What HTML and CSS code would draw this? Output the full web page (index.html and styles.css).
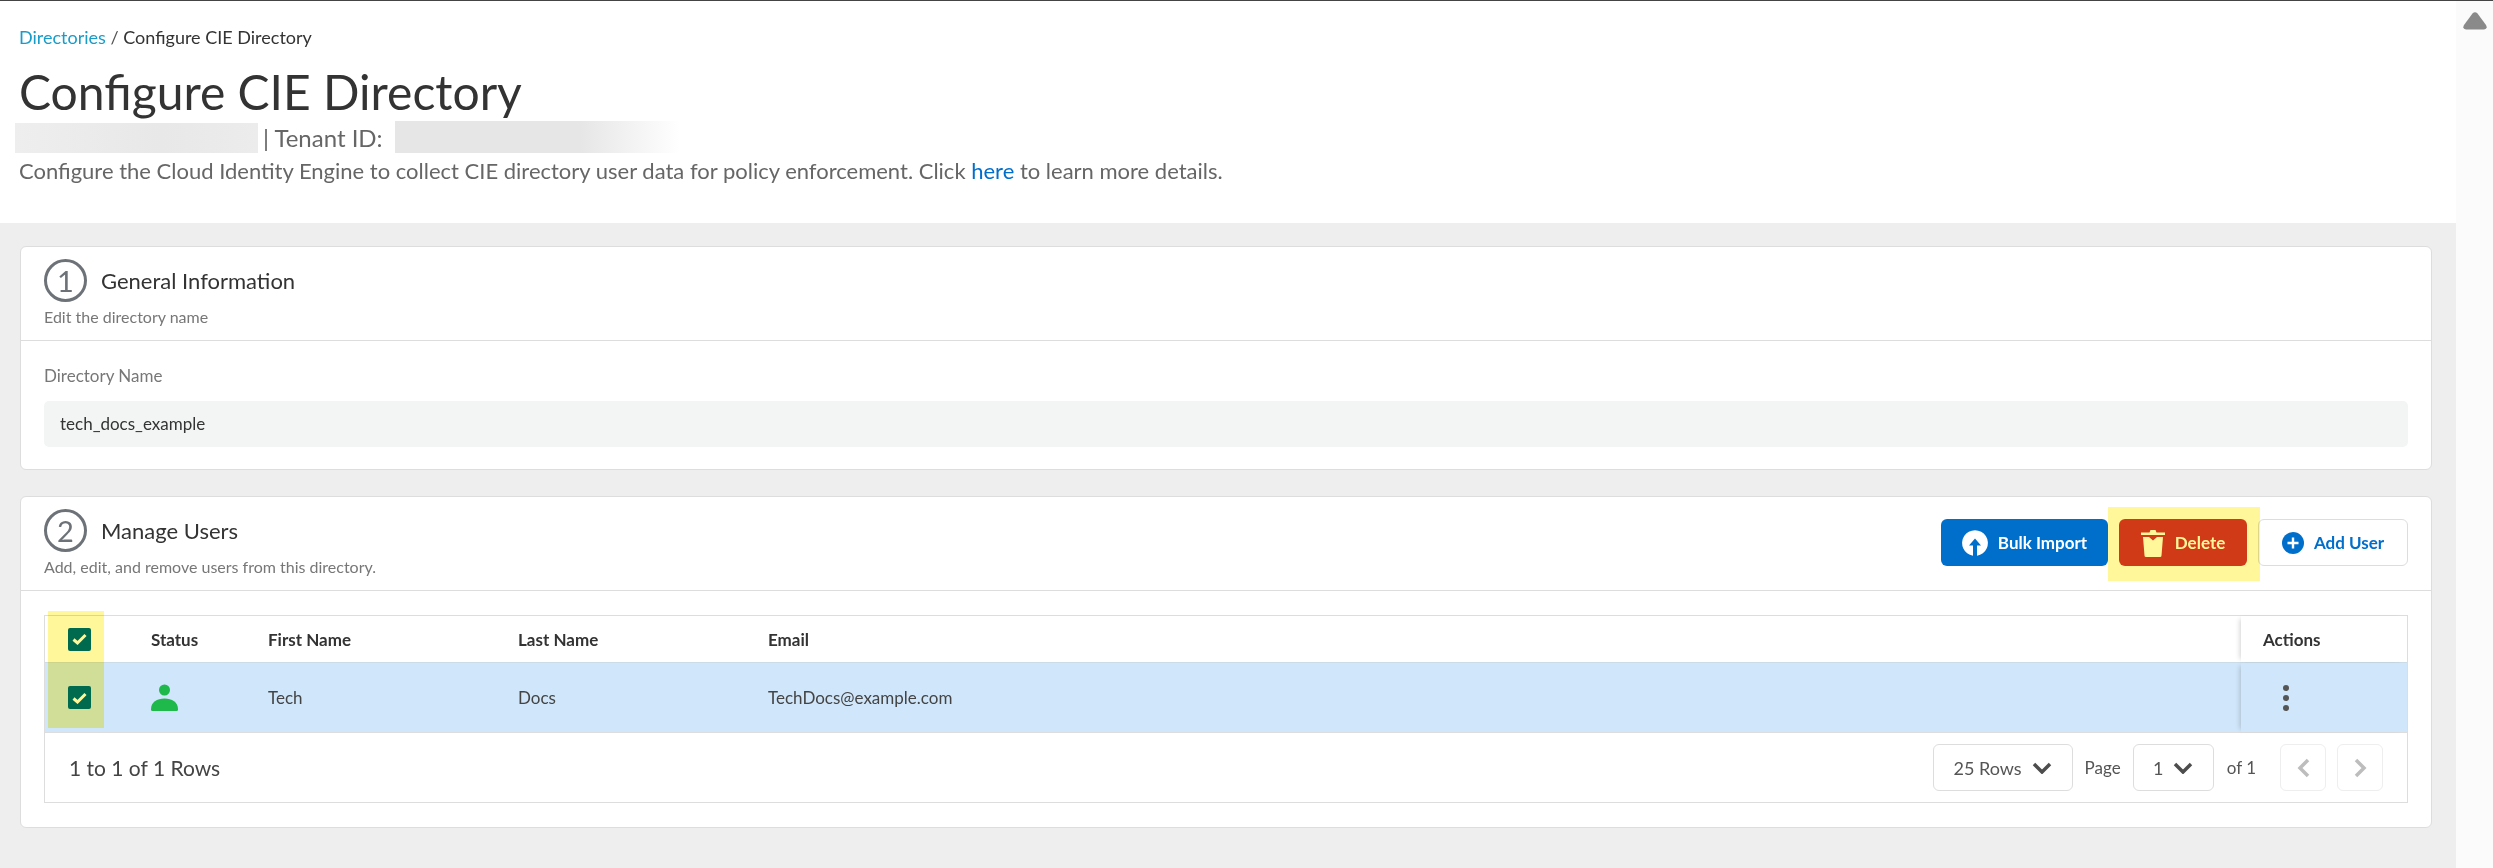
FILE: index.html
```html
<!DOCTYPE html>
<html lang="en">
<head>
<meta charset="utf-8">
<title>Configure CIE Directory</title>
<link rel="stylesheet" href="styles.css">
</head>
<body>
<div class="page">
  <main class="main">
    <header class="head">
      <nav class="crumbs"><a class="crumb-link">Directories</a> <span class="crumb-sep">/</span> Configure CIE Directory</nav>
      <h1 class="title">Configure CIE Directory</h1>
      <div class="tenant"><span class="blur blur-a"></span><span class="tenant-text">| Tenant ID:</span><span class="blur blur-b"></span></div>
      <p class="intro">Configure the Cloud Identity Engine to collect CIE directory user data for policy enforcement. Click <a class="here">here</a> to learn more details.</p>
    </header>
    <div class="content">
      <section class="card">
        <div class="card-head">
          <div class="card-info">
            <div class="card-title-row"><span class="step">1</span><h2 class="card-title">General Information</h2></div>
            <div class="card-sub">Edit the directory name</div>
          </div>
        </div>
        <div class="card-body">
          <label class="field-label">Directory Name</label>
          <div class="field">tech_docs_example</div>
        </div>
      </section>
      <section class="card">
        <div class="card-head">
          <div class="card-info">
            <div class="card-title-row"><span class="step">2</span><h2 class="card-title">Manage Users</h2></div>
            <div class="card-sub">Add, edit, and remove users from this directory.</div>
          </div>
          <div class="actions">
            <button class="btn btn-blue">
              <svg class="ic" width="26" height="26" viewBox="0 0 26 26"><path fill="#fff" d="M11 25.8A12.9 12.9 0 1 1 15 25.8V15.5h4L13 8.5l-6 7h4z"/></svg>
              Bulk Import
            </button>
            <button class="btn btn-red">
              <svg class="ic" width="24" height="28" viewBox="0 0 24 28"><path fill="#fff" d="M8.5 3.5 9.5 1h5l1 2.500H24V6H0V3.500zM2 8l6 0 4 3.500L16 8l6 0-1.500 18.500a1.500 1.500 0 0 1-1.500 1.500H5a1.500 1.500 0 0 1-1.500-1.500z"/></svg>
              Delete
            </button>
            <span class="mark mark-delete"></span>
            <button class="btn btn-plain">
              <svg class="ic" width="22" height="22" viewBox="0 0 22 22"><circle cx="11" cy="11" r="11" fill="#006fcc"/><path stroke="#fff" stroke-width="2.400" d="M11 5.500v11M5.500 11h11"/></svg>
              Add User
            </button>
          </div>
        </div>
        <div class="card-body card-body-table">
          <div class="table">
            <span class="mark mark-check"></span>
            <div class="tr th">
              <div class="c c-check"><span class="box"><svg width="15" height="12" viewBox="0 0 15 12"><path fill="none" stroke="#fff" stroke-width="3" d="M1.500 6.500 5.500 10 13.500 2"/></svg></span></div>
              <div class="c c-status">Status</div>
              <div class="c c-name">First Name</div>
              <div class="c c-name">Last Name</div>
              <div class="c c-email">Email</div>
              <div class="c c-act">Actions</div>
            </div>
            <div class="tr td">
              <div class="c c-check"><span class="box"><svg width="15" height="12" viewBox="0 0 15 12"><path fill="none" stroke="#fff" stroke-width="3" d="M1.500 6.500 5.500 10 13.500 2"/></svg></span></div>
              <div class="c c-status"><svg width="27" height="27" viewBox="0 0 27 27"><circle cx="13.500" cy="6" r="5.500" fill="#1fb84a"/><path fill="#1fb84a" d="M0 25.500C0 18 6 14.500 13.500 14.500S27 18 27 25.500q0 1.500-1.500 1.500h-24Q0 27 0 25.500z"/></svg></div>
              <div class="c c-name">Tech</div>
              <div class="c c-name">Docs</div>
              <div class="c c-email">TechDocs@example.com</div>
              <div class="c c-act"><span class="kebab"><i></i><i></i><i></i></span></div>
            </div>
            <div class="tfoot">
              <div class="count">1 to 1 of 1 Rows</div>
              <div class="pager">
                <div class="select select-rows">25 Rows <svg width="20" height="12" viewBox="0 0 20 12"><path fill="none" stroke="#4d4d4d" stroke-width="3.500" d="M2 2l8 8 8-8"/></svg></div>
                <span class="pager-text pager-page">Page</span>
                <div class="select select-page">1 <svg width="20" height="12" viewBox="0 0 20 12"><path fill="none" stroke="#4d4d4d" stroke-width="3.500" d="M2 2l8 8 8-8"/></svg></div>
                <span class="pager-text pager-of">of 1</span>
                <div class="nav nav-prev"><svg width="13" height="20" viewBox="0 0 13 20"><path fill="none" stroke="#bdbdbd" stroke-width="3.500" d="M11 2 3 10l8 8"/></svg></div>
                <div class="nav"><svg width="13" height="20" viewBox="0 0 13 20"><path fill="none" stroke="#bdbdbd" stroke-width="3.500" d="M2 2l8 8-8 8"/></svg></div>
              </div>
            </div>
          </div>
        </div>
      </section>
    </div>
  </main>
  <aside class="scroll"><svg width="24" height="18" viewBox="0 0 24 18"><path fill="#8a8a8a" d="M9.500 1.500q2.500-2.500 5 0l8.500 11.500q2 4-2 4.500H3q-4-.5-2-4.500z"/></svg></aside>
</div>
</body>
</html>
```

FILE: styles.css
```css
* { box-sizing: border-box; }
html, body { margin: 0; padding: 0; height: 100%; }
body { font-family: Lato, "Open Sans", sans-serif; color: #333; background: #eee; overflow: hidden; }
.page { display: flex; height: 868px; border-top: 1px solid #444; }
.main { flex: 1; min-width: 0; background: #eee; }
.scroll { width: 37px; background: #fbfbfb; padding: 11px 0 0 7px; }
.scroll svg { display: block; }

.head { background: #fff; height: 222px; padding: 25px 19px 0; }
.crumbs { font-size: 18px; line-height: 22px; color: #333; }
.crumb-link { color: #1a9cc9; }
.crumb-sep { color: #555; }
.title { margin: 15px 0 0; font-size: 48px; line-height: 58px; font-weight: 400; color: #333; }
.tenant { display: flex; align-items: center; height: 32px; margin: 0 0 0 -4px; font-size: 24px; color: #666; }
.blur { display: block; }
.blur-a { width: 243px; height: 30px; margin-top: 1px; background: linear-gradient(90deg, #eee, #e8e8e8 60%, #ececec); }
.blur-b { width: 285px; height: 32px; background: linear-gradient(90deg, #e6e6e6, #e6e6e6 65%, #fff); }
.tenant-text { margin: 0 12px 0 5px; }
.intro { margin: 3px 0 0; font-size: 22px; line-height: 30px; color: #666; }
.here { color: #006fcc; }

.content { padding: 23px 24px 0 20px; }
.card { background: #fff; border: 1px solid #ddd; border-radius: 6px; margin-bottom: 26px; }
.card-head { display: flex; justify-content: space-between; align-items: flex-start; height: 94px; padding: 12px 23px 0; border-bottom: 1px solid #ddd; }
.card-title-row { display: flex; align-items: center; height: 43px; }
.step { width: 43px; height: 43px; border: 3px solid #6c7277; border-radius: 50%; display: flex; align-items: center; justify-content: center; font-size: 29px; color: #6c7277; }
.card-title { margin: 0 0 0 14px; font-size: 22px; font-weight: 400; color: #333; }
.card-sub { margin-top: 4px; font-size: 16px; line-height: 22px; color: #777; }

.card-body { padding: 24px 23px 22px; }
.field-label { display: block; font-size: 17px; line-height: 22px; color: #777; }
.field { height: 46px; margin-top: 14px; padding: 0 16px; border-radius: 5px; background: #f3f5f5; font-size: 17px; line-height: 46px; color: #333; }

.actions { position: relative; display: flex; align-items: center; margin-top: 10px; }
.btn { display: flex; align-items: center; justify-content: center; height: 47px; border: 0; border-radius: 6px; font: 700 17px Lato, sans-serif; }
.ic { margin-right: 10px; flex: none; }
.btn-blue { width: 167px; background: #006fcc; color: #fff; }
.btn-red { width: 128px; margin-left: 11px; background: #d13c23; color: #fff; }
.btn-plain { width: 150px; margin-left: 11px; background: #fff; border: 1px solid #ddd; color: #006fcc; }
.mark { position: absolute; background: #fff79a; mix-blend-mode: multiply; pointer-events: none; }
.mark-delete { left: 167px; top: -12px; width: 152px; height: 74px; }

.card-body-table { padding: 24px 23px 24px; }
.table { position: relative; border: 1px solid #ddd; }
.mark-check { left: 3px; top: -5px; width: 56px; height: 117px; }
.tr { display: flex; align-items: stretch; }
.th { height: 46px; font-size: 17px; font-weight: 700; color: #333; }
.td { height: 71px; background: #d0e6fa; border-top: 1px solid #ccdbe8; border-bottom: 1px solid #ddd; font-size: 17px; color: #444; }
.c { display: flex; align-items: center; flex: none; }
.c-check { width: 106px; padding-left: 23px; }
.c-status { width: 117px; }
.c-name { width: 250px; }
.c-email { flex: 1; }
.c-act { width: 166px; padding-left: 22px; box-shadow: -4px 0 5px -3px rgba(0, 0, 0, .18); }
.box { width: 23px; height: 23px; border-radius: 2px; background: #006d82; display: flex; align-items: center; justify-content: center; }
.kebab { display: flex; flex-direction: column; gap: 4px; margin-left: 20px; }
.kebab i { display: block; width: 6px; height: 6px; border-radius: 50%; background: #555; }

.tfoot { display: flex; justify-content: space-between; align-items: center; height: 69px; padding: 0 24px; }
.count { font-size: 21px; color: #444; }
.pager { display: flex; align-items: center; font-size: 17px; color: #555; }
.select { display: flex; align-items: center; justify-content: center; gap: 10px; height: 47px; border: 1px solid #ddd; border-radius: 6px; }
.select-rows { width: 140px; font-size: 18px; }
.select-page { width: 81px; font-size: 18px; }
.pager-page { margin: 0 12px; }
.pager-of { margin: 0 24px 0 13px; }
.nav { display: flex; align-items: center; justify-content: center; width: 46px; height: 47px; border: 1px solid #eee; border-radius: 6px; margin-right: 11px; }
.nav:last-child { margin-right: 0; }
```
